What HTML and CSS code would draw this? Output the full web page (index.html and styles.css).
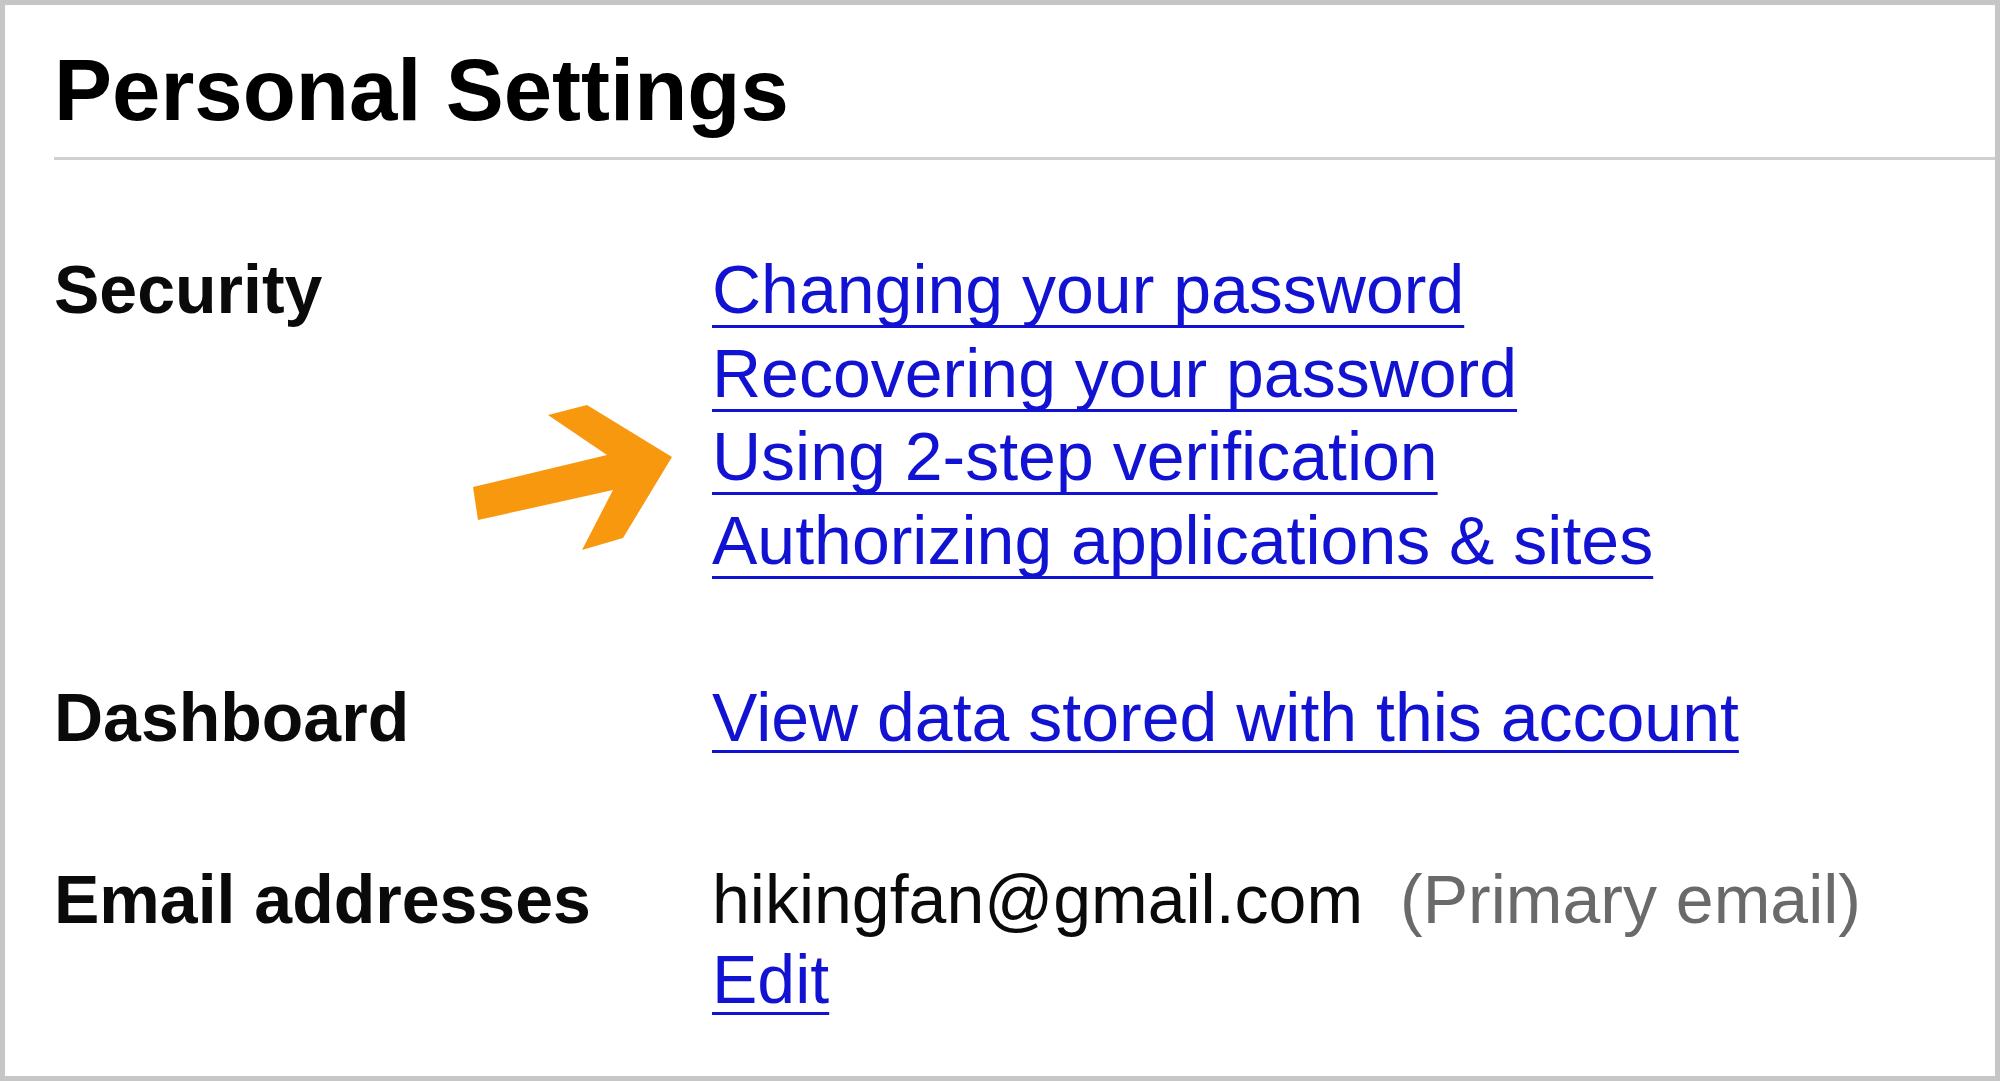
FILE: index.html
```html
<!DOCTYPE html>
<html lang="en">
<head>
<meta charset="utf-8">
<title>Personal Settings</title>
<link rel="stylesheet" href="styles.css">
</head>
<body>
<div class="frame">
  <h1 class="title">Personal Settings</h1>
  <div class="rule"></div>

  <div class="row row-security">
    <div class="label">Security</div>
    <div class="value links links-list">
      <a href="#">Changing your password</a>
      <a href="#">Recovering your password</a>
      <a href="#">Using 2-step verification</a>
      <a href="#">Authorizing applications &amp; sites</a>
    </div>
  </div>

  <div class="row row-dashboard">
    <div class="label">Dashboard</div>
    <div class="value links">
      <a href="#">View data stored with this account</a>
    </div>
  </div>

  <div class="row row-email">
    <div class="label">Email addresses</div>
    <div class="value">
      <div class="email-line">hikingfan@gmail.com<span class="note">(Primary email)</span></div>
      <div class="links"><a href="#">Edit</a></div>
    </div>
  </div>

  <svg class="arrow" viewBox="470 400 210 155" width="210" height="155" aria-hidden="true">
    <polygon points="473,487 607,455 548,415 587,405 672,457 623,538 582,550 613,490 478,520" fill="#f8980f"/>
  </svg>
</div>
</body>
</html>
```

FILE: styles.css
```css
html, body {
  margin: 0;
  padding: 0;
  background: #ffffff;
}

.frame {
  position: relative;
  box-sizing: border-box;
  width: 2000px;
  height: 1081px;
  border: 5px solid #c6c6c6;
  padding: 41px 0 0 49px;
  background: #ffffff;
  font-family: "Liberation Sans", Arial, Helvetica, sans-serif;
  color: #000000;
  overflow: hidden;
}

.title {
  margin: 0;
  font-size: 87px;
  line-height: 87px;
  font-weight: 700;
  color: #000000;
}

.rule {
  margin-top: 24px;
  height: 3px;
  background: #d0d0d0;
}

.row {
  display: grid;
  grid-template-columns: 658px 1fr;
  font-size: 68px;
  line-height: 83.5px;
}

.row-security {
  margin-top: 88px;
}

.row-dashboard {
  margin-top: 94px;
}

.row-email {
  margin-top: 99px;
  line-height: 80px;
}

.label {
  font-weight: 700;
  color: #0a0a0a;
}

.links {
  display: flex;
  flex-direction: column;
  align-items: flex-start;
}

.links a {
  color: #1212d2;
  text-decoration: underline;
  text-decoration-thickness: 3px;
  text-decoration-skip-ink: none;
  text-underline-offset: 9px;
}

.links-list a {
  text-underline-offset: 12px;
}

.email-line {
  color: #0a0a0a;
}

.note {
  margin-left: 37px;
  color: #6a6a6a;
}

.arrow {
  position: absolute;
  left: 465px;
  top: 395px;
}
```
